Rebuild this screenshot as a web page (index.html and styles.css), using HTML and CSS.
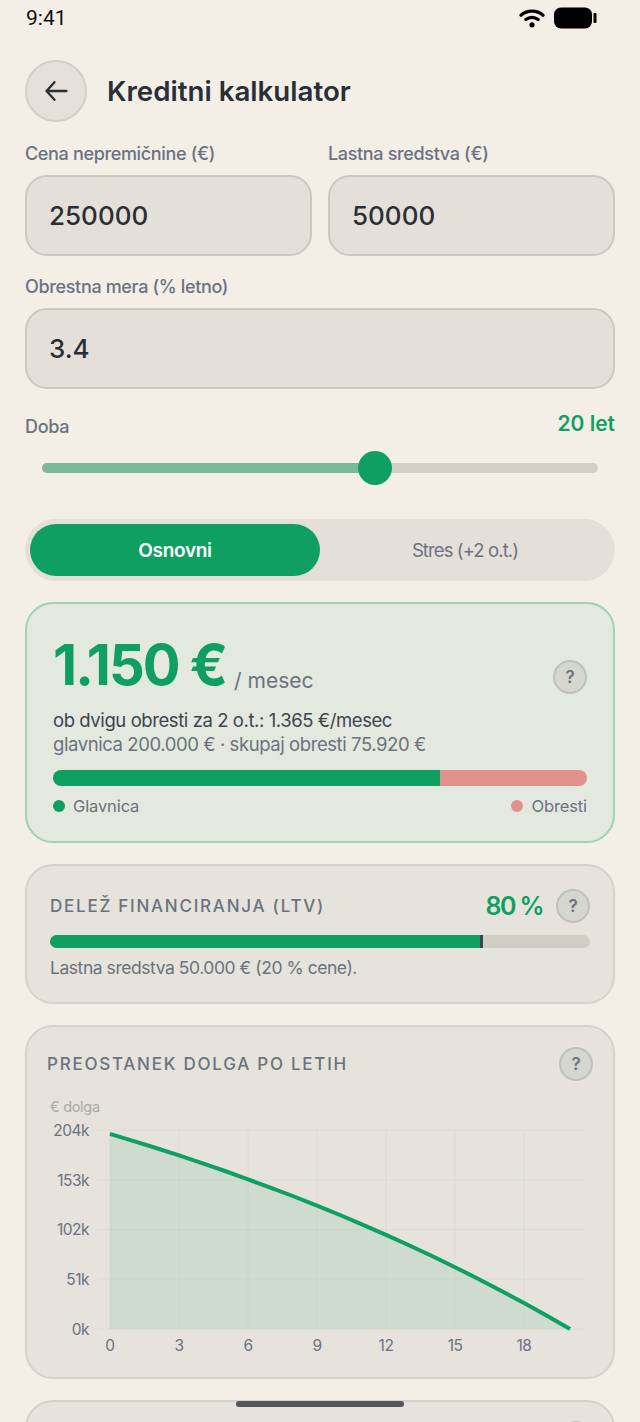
FILE: index.html
```html
<!DOCTYPE html>
<html lang="sl">
<head>
    <meta charset="UTF-8">
    <meta name="viewport" content="width=device-width, initial-scale=1.0">
    <title>Kreditni kalkulator</title>
    <link rel="stylesheet" href="styles.css">
</head>
<body>
    <div class="status-bar">
        <span class="status-time">9:41</span>
        <div class="status-icons">
            <svg class="icon-wifi" width="26" height="20" viewBox="0 0 26 20">
                <path d="M2 7.2C8.2 1.8 17.8 1.8 24 7.2" fill="none" stroke="#000" stroke-width="3.2" stroke-linecap="round"/>
                <path d="M6.8 11.6C10.4 8.6 15.6 8.6 19.2 11.6" fill="none" stroke="#000" stroke-width="3.2" stroke-linecap="round"/>
                <circle cx="13" cy="16.8" r="2.6" fill="#000"/>
            </svg>
            <svg class="icon-battery" width="43" height="22" viewBox="0 0 43 22">
                <rect x="0" y="0.5" width="38" height="21" rx="7" fill="#000"/>
                <rect x="39.5" y="6" width="3" height="10" rx="1.2" fill="#000"/>
            </svg>
        </div>
    </div>

    <header class="top-bar">
        <button class="back-btn">
            <svg width="26" height="26" viewBox="0 0 26 26">
                <path d="M23.5 13H3.5M11.5 4.2L3.5 13l8 8.8" fill="none" stroke="#2a2e36" stroke-width="2.3" stroke-linecap="round" stroke-linejoin="round"/>
            </svg>
        </button>
        <h1 class="page-title">Kreditni kalkulator</h1>
    </header>

    <main class="content">
        <div class="field-row">
            <div class="field">
                <label class="field-label">Cena nepremičnine (€)</label>
                <div class="field-box">250000</div>
            </div>
            <div class="field">
                <label class="field-label">Lastna sredstva (€)</label>
                <div class="field-box">50000</div>
            </div>
        </div>
        <div class="field field-rate">
            <label class="field-label">Obrestna mera (% letno)</label>
            <div class="field-box">3.4</div>
        </div>

        <div class="term-head">
            <span class="field-label">Doba</span>
            <span class="term-value">20 let</span>
        </div>
        <div class="slider">
            <div class="slider-fill"></div>
            <div class="slider-thumb"></div>
        </div>

        <div class="segmented">
            <div class="segment segment-active">Osnovni</div>
            <div class="segment">Stres (+2 o.t.)</div>
        </div>

        <section class="card card-result">
            <div class="result-head">
                <div class="result-amount"><span class="amount">1.150 €</span><span class="per-month">/ mesec</span></div>
                <button class="help-btn">?</button>
            </div>
            <p class="result-stress">ob dvigu obresti za 2 o.t.: 1.365 €/mesec</p>
            <p class="result-sum">glavnica 200.000 € · skupaj obresti 75.920 €</p>
            <div class="split-bar">
                <div class="split-main"></div>
                <div class="split-rest"></div>
            </div>
            <div class="legend">
                <span class="legend-item"><i class="dot dot-green"></i>Glavnica</span>
                <span class="legend-item"><i class="dot dot-red"></i>Obresti</span>
            </div>
        </section>

        <section class="card card-ltv">
            <div class="ltv-head">
                <h2 class="card-title">DELEŽ FINANCIRANJA (LTV)</h2>
                <span class="ltv-value">80 %</span>
                <button class="help-btn">?</button>
            </div>
            <div class="ltv-bar">
                <div class="ltv-fill"></div>
            </div>
            <p class="ltv-note">Lastna sredstva 50.000 € (20 % cene).</p>
        </section>

        <section class="card card-chart">
            <div class="chart-head">
                <h2 class="card-title">PREOSTANEK DOLGA PO LETIH</h2>
                <button class="help-btn">?</button>
            </div>
            <svg class="chart" width="586" height="279" viewBox="25 1098 586 279">
                <text class="chart-unit" x="50" y="1112">€ dolga</text>
                <g class="grid">
                    <path d="M98 1130H584M98 1180H584M98 1229.5H584M98 1279H584M98 1329H584"/>
                    <path d="M110 1130V1329M179 1130V1329M248 1130V1329M317 1130V1329M386 1130V1329M455 1130V1329M524 1130V1329"/>
                </g>
                <path class="chart-area" d="M110 1133.9L133 1140.8 156 1148 179 1155.4 202 1163.1 225 1171 248 1179.3 271 1187.8 294 1196.5 317 1205.6 340 1215 363 1224.8 386 1234.9 409 1245.3 432 1256 455 1267.2 478 1278.7 501 1290.7 524 1303 547 1315.8 570 1329H110Z"/>
                <path class="chart-line" d="M110 1133.9L133 1140.8 156 1148 179 1155.4 202 1163.1 225 1171 248 1179.3 271 1187.8 294 1196.5 317 1205.6 340 1215 363 1224.8 386 1234.9 409 1245.3 432 1256 455 1267.2 478 1278.7 501 1290.7 524 1303 547 1315.8 570 1329"/>
                <g class="axis-y">
                    <text x="89" y="1135.5">204k</text>
                    <text x="89" y="1185.5">153k</text>
                    <text x="89" y="1235">102k</text>
                    <text x="89" y="1284.5">51k</text>
                    <text x="89" y="1334.5">0k</text>
                </g>
                <g class="axis-x">
                    <text x="110" y="1350.5">0</text>
                    <text x="179" y="1350.5">3</text>
                    <text x="248" y="1350.5">6</text>
                    <text x="317" y="1350.5">9</text>
                    <text x="386" y="1350.5">12</text>
                    <text x="455" y="1350.5">15</text>
                    <text x="524" y="1350.5">18</text>
                </g>
            </svg>
        </section>

        <section class="card card-next">
            <button class="help-btn"></button>
        </section>
    </main>

    <div class="home-indicator"></div>
</body>
</html>
```

FILE: styles.css
```css
* {
    box-sizing: border-box;
}

html, body {
    margin: 0;
    padding: 0;
}

body {
    width: 640px;
    height: 1422px;
    overflow: hidden;
    position: relative;
    background-color: #f3efe7;
    color: #2a2e36;
    font-family: 'Inter', 'Noto Sans', sans-serif;
}

h1, h2, p {
    margin: 0;
}

button {
    font-family: inherit;
    padding: 0;
    cursor: pointer;
}

.status-bar {
    height: 60px;
    padding: 5px 43px 0 26px;
    display: flex;
    justify-content: space-between;
    align-items: flex-start;
}

.status-time {
    font-family: 'Roboto', sans-serif;
    font-size: 21px;
    line-height: 26px;
    color: #111;
}

.status-icons {
    display: flex;
    align-items: center;
    gap: 9px;
    height: 26px;
}

.top-bar {
    height: 61px;
    padding-left: 25px;
    display: flex;
    align-items: center;
    gap: 20px;
}

.back-btn {
    width: 62px;
    height: 62px;
    border-radius: 50%;
    background-color: #e5e1da;
    border: 2px solid #d2cfc7;
    display: flex;
    align-items: center;
    justify-content: center;
}

.page-title {
    font-size: 27.7px;
    font-weight: 600;
    color: #2a2e36;
}

.content {
    padding: 21px 25px 0;
}

.field-row {
    display: grid;
    grid-template-columns: 287px 287px;
    gap: 16px;
}

.field-label {
    display: block;
    font-size: 18px;
    line-height: 24px;
    font-weight: 500;
    letter-spacing: -0.34px;
    color: #6b7280;
}

.field-box {
    margin-top: 9px;
    height: 81px;
    padding-left: 22px;
    display: flex;
    align-items: center;
    background-color: #e4e0d9;
    border: 2px solid #cbc8c0;
    border-radius: 22px;
    font-size: 26px;
    font-weight: 500;
    color: #2a2e36;
}

.field-rate {
    margin-top: 19px;
}

.term-head {
    margin-top: 23px;
    height: 30px;
    display: flex;
    justify-content: space-between;
    align-items: center;
}

.term-value {
    font-size: 21px;
    line-height: 30px;
    font-weight: 600;
    color: #0f9f62;
    position: relative;
    top: -3px;
}

.slider {
    margin: 21px 17px 0;
    height: 10px;
    border-radius: 5px;
    background-color: #d2cfc7;
    position: relative;
}

.slider-fill {
    width: 334px;
    height: 10px;
    border-radius: 5px;
    background-color: #7ab99a;
}

.slider-thumb {
    position: absolute;
    left: 316px;
    top: -12px;
    width: 34px;
    height: 34px;
    border-radius: 50%;
    background-color: #0f9f62;
}

.segmented {
    margin-top: 46px;
    height: 62px;
    padding: 5px;
    display: grid;
    grid-template-columns: 290px 290px;
    background-color: #e4e0d9;
    border-radius: 31px;
}

.segment {
    display: flex;
    align-items: center;
    justify-content: center;
    border-radius: 26px;
    font-size: 18.5px;
    font-weight: 400;
    letter-spacing: -0.9px;
    color: #6b7280;
}

.segment-active {
    background-color: #0f9f62;
    color: #fff;
    font-size: 19px;
    font-weight: 600;
    letter-spacing: -0.3px;
}

.card {
    border-radius: 28px;
    border: 2px solid #d4d2ca;
    background-color: #e5e3db;
}

.card-result {
    margin-top: 21px;
    height: 241px;
    padding: 26px 26px 0;
    background-color: #e3e9de;
    border-color: #9cd4b4;
}

.result-head {
    height: 70px;
    display: flex;
    justify-content: space-between;
    align-items: flex-end;
}

.result-amount {
    display: flex;
    align-items: flex-end;
    gap: 8px;
    white-space: nowrap;
}

.amount {
    font-size: 56px;
    line-height: 70px;
    font-weight: 700;
    letter-spacing: -2px;
    color: #0f9f62;
}

.per-month {
    font-size: 21px;
    line-height: 30px;
    margin-bottom: 4px;
    color: #6b7280;
}

.help-btn {
    width: 34px;
    height: 34px;
    flex: none;
    border-radius: 50%;
    background-color: #d5d7cf;
    border: 2px solid #c0c1bb;
    font-size: 17px;
    font-weight: 600;
    color: #6b7280;
}

.result-head .help-btn {
    margin-bottom: 6px;
}

.result-stress,
.result-sum {
    font-size: 18.5px;
    line-height: 24px;
    letter-spacing: -0.42px;
}

.result-stress {
    margin-top: 8px;
    color: #3f444e;
}

.result-sum {
    color: #6b7280;
}

.split-bar {
    margin-top: 14px;
    height: 16px;
    display: flex;
    border-radius: 8px;
    overflow: hidden;
}

.split-main {
    width: 387px;
    background-color: #0f9f62;
}

.split-rest {
    flex: 1;
    background-color: #e0918b;
}

.legend {
    margin-top: 9px;
    display: flex;
    justify-content: space-between;
    font-size: 16.5px;
    line-height: 22px;
    letter-spacing: -0.12px;
    color: #6b7280;
}

.legend-item {
    display: flex;
    align-items: center;
    gap: 8px;
}

.dot {
    width: 12px;
    height: 12px;
    border-radius: 50%;
}

.dot-green {
    background-color: #0f9f62;
}

.dot-red {
    background-color: #e0918b;
}

.card-ltv {
    margin-top: 21px;
    height: 140px;
    padding: 23px 23px 0;
}

.ltv-head {
    display: flex;
    align-items: center;
    height: 34px;
}

.card-title {
    font-size: 17px;
    font-weight: 500;
    letter-spacing: 1.75px;
    color: #6b7280;
}

.ltv-value {
    margin-left: auto;
    margin-right: 13px;
    font-size: 25px;
    font-weight: 600;
    letter-spacing: -1.6px;
    color: #0f9f62;
}

.ltv-bar {
    margin-top: 12px;
    height: 13px;
    border-radius: 7px;
    background-color: #d0cdc5;
    overflow: hidden;
}

.ltv-fill {
    width: 433px;
    height: 13px;
    background-color: #0f9f62;
    border-right: 3px solid #3f444e;
}

.ltv-note {
    margin-top: 9px;
    font-size: 17.5px;
    line-height: 22px;
    letter-spacing: -0.45px;
    color: #6b7280;
}

.card-chart {
    margin-top: 21px;
    height: 354px;
    padding-top: 20px;
}

.chart-head {
    height: 34px;
    padding: 0 20px;
    display: flex;
    justify-content: space-between;
    align-items: center;
}

.chart {
    display: block;
    margin: 17px 0 0 -2px;
}

.chart-unit {
    font-size: 14.5px;
    letter-spacing: -0.3px;
    fill: #a9a9a5;
}

.grid path {
    fill: none;
    stroke: #dcdbd2;
    stroke-width: 1;
}

.chart-area {
    fill: rgba(15, 159, 98, 0.1);
}

.chart-line {
    fill: none;
    stroke: #0f9f62;
    stroke-width: 4;
}

.axis-y text,
.axis-x text {
    font-size: 15.5px;
    letter-spacing: -0.5px;
    fill: #6b7280;
}

.axis-y text {
    text-anchor: end;
}

.axis-x text {
    text-anchor: middle;
}

.card-next {
    margin-top: 21px;
    height: 200px;
    padding: 19px 20px 0;
    display: flex;
    justify-content: flex-end;
    align-items: flex-start;
}

.home-indicator {
    position: absolute;
    left: 236px;
    top: 1401px;
    width: 168px;
    height: 6px;
    border-radius: 3px;
    background-color: #55565c;
}
```
